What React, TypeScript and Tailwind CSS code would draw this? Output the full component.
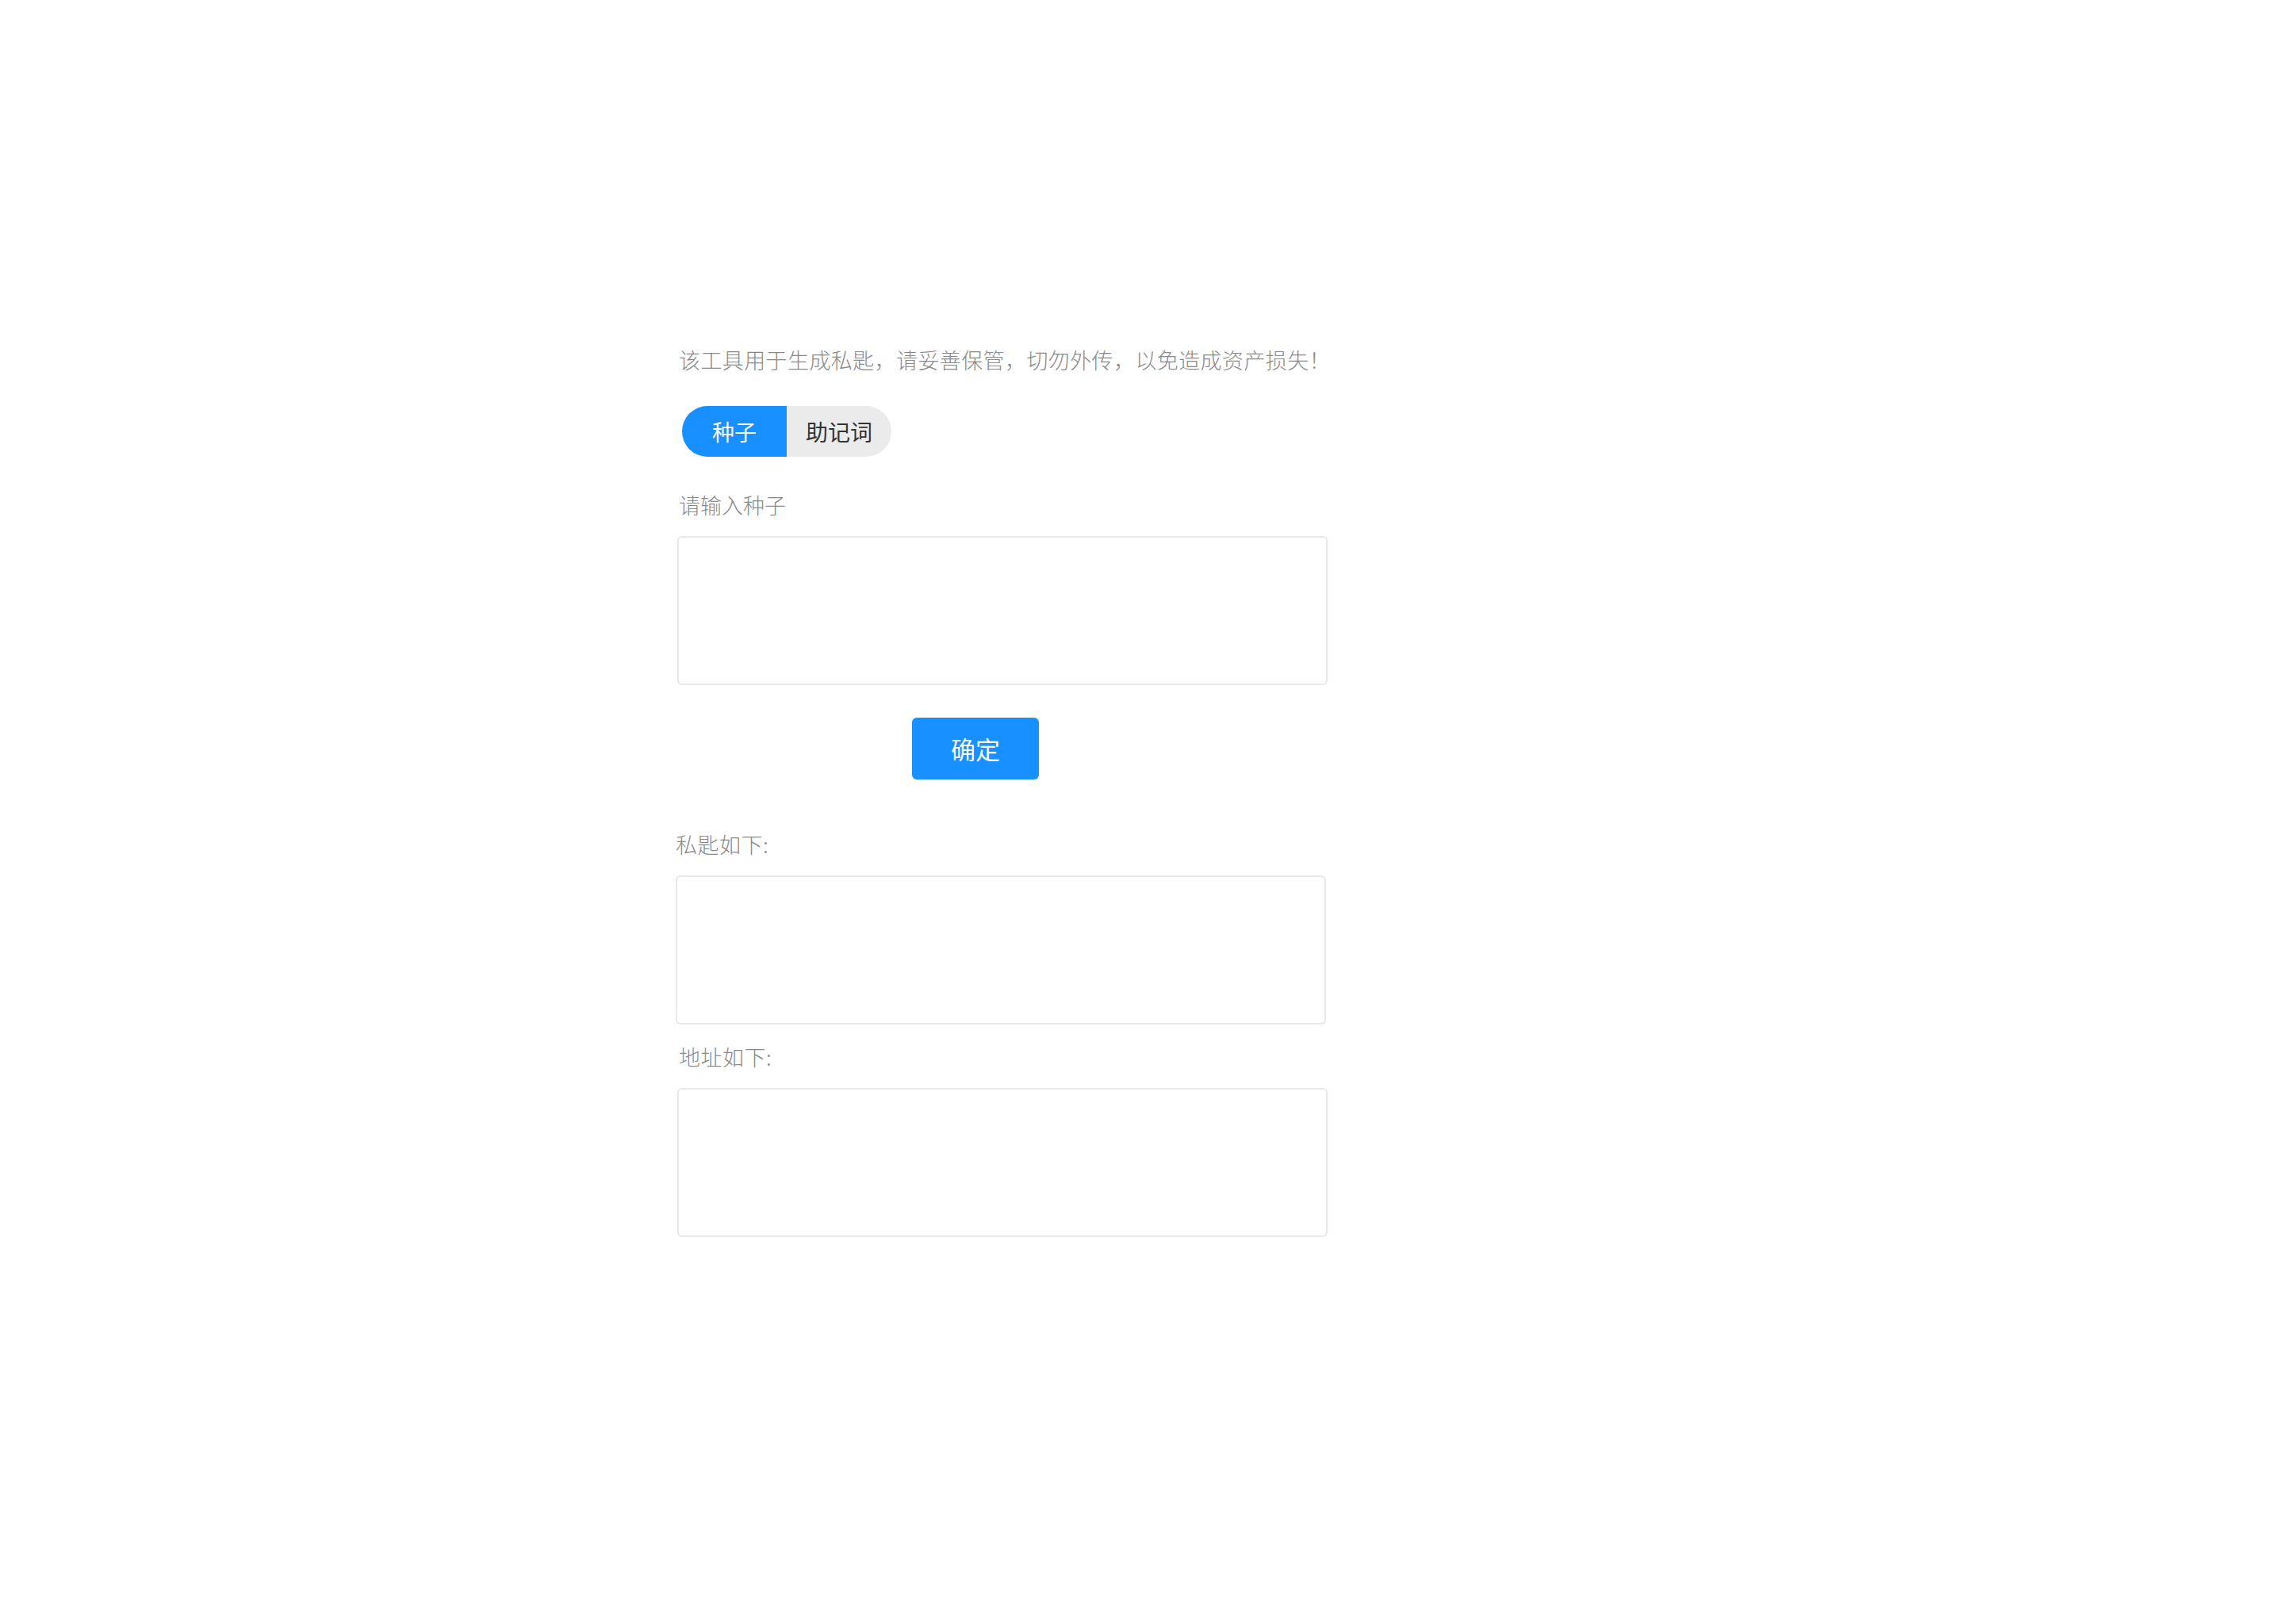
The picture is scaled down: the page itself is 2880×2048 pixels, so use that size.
import { useState } from "react";

const font = "font-['Noto_Sans_CJK_SC','Noto_Sans',sans-serif]";

function Field({ className = "" }: { className?: string }) {
  return (
    <textarea
      className={`block h-[188px] w-[820px] resize-none rounded-[6px] border-2 border-[#e8e8e8] bg-white p-3 text-[27px] text-[#333] outline-none ${className}`}
    />
  );
}

export default function App() {
  const [mode, setMode] = useState<"seed" | "mnemonic">("seed");

  return (
    <div className={`min-h-screen w-full bg-white ${font}`}>
      <div className="flex flex-col pl-[854px] pb-[400px]">
        <div className="mt-[434px] h-[40px] pl-[2px] text-[27px] font-light leading-[40px] tracking-[0.4px] text-[#8a8a8a]">
          该工具用于生成私匙，请妥善保管，切勿外传，以免造成资产损失！
        </div>

        <div className="ml-[6px] mt-[38px] flex h-[64px] w-[264px]">
          <button
            onClick={() => setMode("seed")}
            className={`h-full w-[132px] rounded-l-full text-[28px] ${
              mode === "seed" ? "bg-[#1890ff] text-white" : "bg-[#ebebeb] text-[#333]"
            }`}
          >
            种子
          </button>
          <button
            onClick={() => setMode("mnemonic")}
            className={`h-full w-[132px] rounded-r-full text-[28px] ${
              mode === "mnemonic" ? "bg-[#1890ff] text-white" : "bg-[#ebebeb] text-[#333]"
            }`}
          >
            助记词
          </button>
        </div>

        <div className="mt-[41px] h-[40px] pl-[2px] text-[27px] font-light leading-[40px] text-[#8a8a8a]">
          {mode === "seed" ? "请输入种子" : "请输入助记词"}
        </div>
        <Field className="mt-[19px]" />

        <button className="ml-[296px] mt-[41px] h-[78px] w-[160px] rounded-[6px] bg-[#1890ff] text-[31px] text-white">
          确定
        </button>

        <div className="-ml-[2px] mt-[62px] h-[40px] text-[27px] font-light leading-[40px] tracking-[0.5px] text-[#8a8a8a]">
          私匙如下:
        </div>
        <Field className="-ml-[2px] mt-[19px]" />

        <div className="mt-[21px] h-[40px] pl-[2px] text-[27px] font-light leading-[40px] tracking-[0.5px] text-[#8a8a8a]">
          地址如下:
        </div>
        <Field className="mt-[19px]" />
      </div>
    </div>
  );
}
